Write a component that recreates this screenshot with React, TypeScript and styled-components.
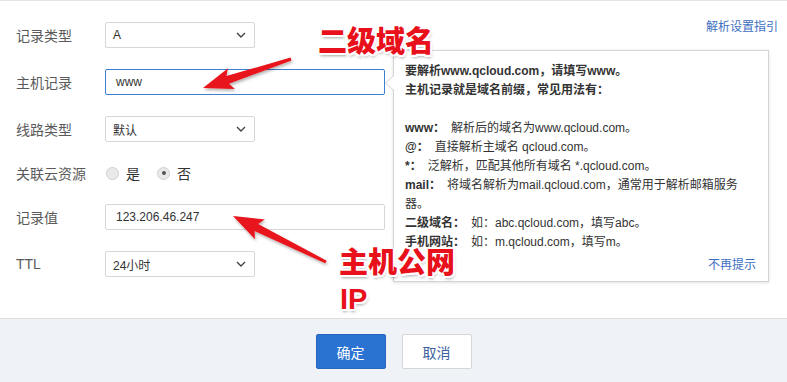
import React from "react";
import styled, { createGlobalStyle } from "styled-components";

const Global = createGlobalStyle`
  html, body { margin: 0; padding: 0; background: #fff; }
  body { font-family: "Liberation Sans", "Noto Sans CJK SC", sans-serif; }
  * { box-sizing: border-box; }
`;

const Page = styled.div`
  position: relative;
  width: 787px;
  height: 382px;
  overflow: hidden;
  display: flex;
  flex-direction: column;
  background: #fff;
`;

const Main = styled.div`
  flex: 1;
  border-top: 1px solid #e4e4e4;
  display: flex;
  justify-content: space-between;
`;

const Form = styled.div`
  padding: 21px 0 0 16px;
  display: flex;
  flex-direction: column;
  gap: 21px;
`;

const Row = styled.div`
  display: flex;
  align-items: center;
  min-height: ${(p: { $h?: number }) => p.$h ?? 26}px;
`;

const Label = styled.div`
  width: 89px;
  font-size: 14px;
  color: #5a5a5a;
`;

const SelectBox = styled.div`
  width: 150px;
  height: 26px;
  border: 1px solid #d6d6d6;
  border-radius: 2px;
  padding: 0 8px 0 7px;
  display: flex;
  align-items: center;
  justify-content: space-between;
  font-size: 12px;
  color: #333;
  background: #fff;
`;

const InputBox = styled.div<{ $focus?: boolean }>`
  width: 280px;
  height: 26px;
  border: 1px solid ${(p) => (p.$focus ? "#3c7fcf" : "#d6d6d6")};
  border-radius: 2px;
  padding: 0 10px;
  display: flex;
  align-items: center;
  font-size: 12px;
  color: #333;
  background: #fff;
`;

const RadioGroup = styled.div`
  display: flex;
  align-items: center;
  gap: 17px;
  margin-left: 1px;
`;

const RadioItem = styled.label`
  display: flex;
  align-items: center;
  gap: 7px;
  font-size: 14px;
  color: #333;
`;

const RadioDot = styled.span<{ $on?: boolean }>`
  width: 13px;
  height: 13px;
  border-radius: 50%;
  border: 1px solid #cfcfcf;
  background: #e9e9e9;
  display: flex;
  align-items: center;
  justify-content: center;
  &::after {
    content: "";
    width: 4px;
    height: 4px;
    border-radius: 50%;
    background: ${(p) => (p.$on ? "#555" : "transparent")};
  }
`;

const Side = styled.div`
  padding: 16px 9px 0 0;
`;

const Link = styled.a`
  font-size: 12px;
  color: #3d6fc1;
  text-decoration: none;
`;

const Footer = styled.div`
  height: 64px;
  border-top: 1px solid #dcdcdc;
  background: #eff3f7;
  display: flex;
  justify-content: center;
  align-items: flex-start;
  padding-top: 15px;
  gap: 16px;
`;

const Button = styled.button<{ $primary?: boolean }>`
  width: 70px;
  height: 35px;
  border-radius: 2px;
  font-family: inherit;
  font-size: 14px;
  cursor: pointer;
  border: 1px solid ${(p) => (p.$primary ? "#2667bd" : "#d6d6d6")};
  background: ${(p) => (p.$primary ? "#2b73d1" : "#fff")};
  color: ${(p) => (p.$primary ? "#fff" : "#3c5f9e")};
`;

const Popover = styled.div`
  position: absolute;
  left: 393px;
  top: 50px;
  width: 376px;
  height: 232px;
  border: 1px solid #d4d4d4;
  background: #fff;
  box-shadow: 0 1px 3px rgba(0, 0, 0, 0.12);
  padding: 11px 12px 6px 11px;
  display: flex;
  flex-direction: column;
  font-size: 12px;
  line-height: 19px;
  color: #333;
  &::before,
  &::after {
    content: "";
    position: absolute;
    top: 24px;
    border-style: solid;
    border-color: transparent;
  }
  &::before {
    left: -9px;
    border-width: 8px 9px 8px 0;
    border-right-color: #cfcfcf;
  }
  &::after {
    left: -8px;
    border-width: 8px 9px 8px 0;
    border-right-color: #fff;
  }
`;

const Tips = styled.div`
  width: 338px;
`;

const Line = styled.div<{ $bold?: boolean }>`
  font-weight: ${(p) => (p.$bold ? 700 : 400)};
  min-height: 19px;
`;

const Key = styled.b`
  font-weight: 700;
  margin-right: 6px;
`;

const PopFoot = styled.div`
  margin-top: auto;
  text-align: right;
`;

const Annotation = styled.div<{ $x: number; $y: number; $latin?: boolean }>`
  position: absolute;
  left: ${(p) => p.$x}px;
  top: ${(p) => p.$y}px;
  font-family: ${(p) =>
    p.$latin
      ? `"Liberation Sans", "Noto Sans CJK SC", sans-serif`
      : `"Noto Sans CJK SC", "Liberation Sans", sans-serif`};
  font-weight: 900;
  font-size: 29px;
  line-height: 29px;
  color: #e8101a;
  text-shadow: -1.5px -1.5px 0 #fff, 1.5px -1.5px 0 #fff, -1.5px 1.5px 0 #fff,
    1.5px 1.5px 0 #fff, 0 2px 0 #fff, 2px 0 0 #fff, -2px 0 0 #fff, 0 -2px 0 #fff,
    1px 3px 3px rgba(0, 0, 0, 0.35);
  white-space: nowrap;
`;

const Overlay = styled.svg`
  position: absolute;
  left: 0;
  top: 0;
  pointer-events: none;
`;

const Chevron = () => (
  <svg width="10" height="6" viewBox="0 0 10 6">
    <path d="M1 1l4 4 4-4" fill="none" stroke="#444" strokeWidth="1.4" />
  </svg>
);

function arrowPoints(x1: number, y1: number, x2: number, y2: number) {
  const headLen = 26;
  const headW = 22;
  const tailW = 3;
  const neckW = 8;
  const dx = x2 - x1;
  const dy = y2 - y1;
  const len = Math.hypot(dx, dy);
  const ux = dx / len;
  const uy = dy / len;
  const nx = -uy;
  const ny = ux;
  const bx = x2 - ux * headLen;
  const by = y2 - uy * headLen;
  const barbX = x2 - ux * (headLen + 4);
  const barbY = y2 - uy * (headLen + 4);
  const pts = [
    [x1 + (nx * tailW) / 2, y1 + (ny * tailW) / 2],
    [bx + (nx * neckW) / 2, by + (ny * neckW) / 2],
    [barbX + (nx * headW) / 2, barbY + (ny * headW) / 2],
    [x2, y2],
    [barbX - (nx * headW) / 2, barbY - (ny * headW) / 2],
    [bx - (nx * neckW) / 2, by - (ny * neckW) / 2],
    [x1 - (nx * tailW) / 2, y1 - (ny * tailW) / 2],
  ];
  return pts.map((p) => `${p[0].toFixed(1)},${p[1].toFixed(1)}`).join(" ");
}

const Select = ({ value }: { value: string }) => (
  <SelectBox>
    <span>{value}</span>
    <Chevron />
  </SelectBox>
);

export default function App() {
  return (
    <>
      <Global />
      <Page>
        <Main>
          <Form>
            <Row>
              <Label>记录类型</Label>
              <Select value="A" />
            </Row>
            <Row>
              <Label>主机记录</Label>
              <InputBox $focus>www</InputBox>
            </Row>
            <Row>
              <Label>线路类型</Label>
              <Select value="默认" />
            </Row>
            <Row $h={20}>
              <Label>关联云资源</Label>
              <RadioGroup>
                <RadioItem>
                  <RadioDot />是
                </RadioItem>
                <RadioItem>
                  <RadioDot $on />否
                </RadioItem>
              </RadioGroup>
            </Row>
            <Row>
              <Label>记录值</Label>
              <InputBox>123.206.46.247</InputBox>
            </Row>
            <Row>
              <Label>TTL</Label>
              <Select value="24小时" />
            </Row>
          </Form>
          <Side>
            <Link href="#">解析设置指引</Link>
          </Side>
        </Main>
        <Footer>
          <Button $primary>确定</Button>
          <Button>取消</Button>
        </Footer>

        <Popover>
          <Tips>
            <Line $bold>要解析www.qcloud.com，请填写www。</Line>
            <Line $bold>主机记录就是域名前缀，常见用法有：</Line>
            <Line />
            <Line>
              <Key>www：</Key>解析后的域名为www.qcloud.com。
            </Line>
            <Line>
              <Key>@：</Key>直接解析主域名 qcloud.com。
            </Line>
            <Line>
              <Key>*：</Key>泛解析，匹配其他所有域名 *.qcloud.com。
            </Line>
            <Line>
              <Key>mail：</Key>将域名解析为mail.qcloud.com，通常用于解析邮箱服务器。
            </Line>
            <Line>
              <Key>二级域名：</Key>如：abc.qcloud.com，填写abc。
            </Line>
            <Line>
              <Key>手机网站：</Key>如：m.qcloud.com，填写m。
            </Line>
          </Tips>
          <PopFoot>
            <Link href="#">不再提示</Link>
          </PopFoot>
        </Popover>

        <Overlay width="787" height="382" viewBox="0 0 787 382">
          <defs>
            <filter id="sh" x="-20%" y="-20%" width="140%" height="160%">
              <feDropShadow dx="1" dy="2" stdDeviation="1.5" floodColor="#000" floodOpacity="0.3" />
            </filter>
          </defs>
          <polygon points={arrowPoints(291, 59, 203, 88)} fill="#e8151b" filter="url(#sh)" />
          <polygon points={arrowPoints(326, 262, 233, 216)} fill="#e8151b" filter="url(#sh)" />
        </Overlay>

        <Annotation $x={318} $y={25}>二级域名</Annotation>
        <Annotation $x={339} $y={246}>主机公网</Annotation>
        <Annotation $x={340} $y={285} $latin>IP</Annotation>
      </Page>
    </>
  );
}
